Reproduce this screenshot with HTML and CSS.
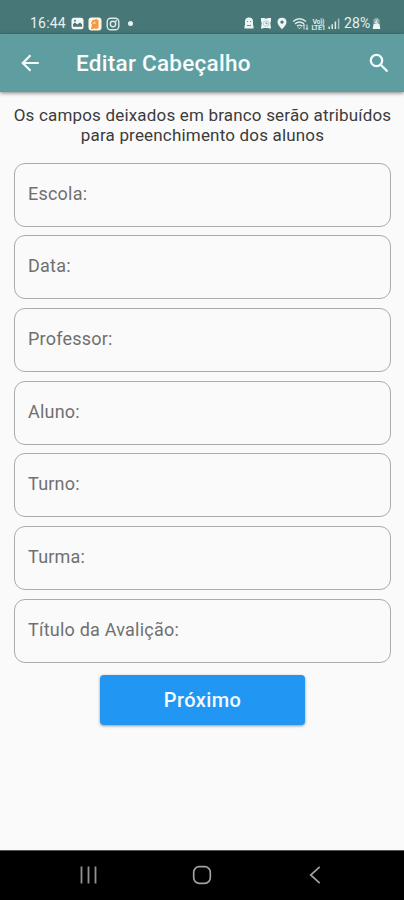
FILE: index.html
```html
<!DOCTYPE html>
<html lang="pt-BR">
<head>
<meta charset="utf-8">
<meta name="viewport" content="width=device-width">
<title>Editar Cabeçalho</title>
<link rel="stylesheet" href="styles.css">
</head>
<body>
<div class="status">
  <div class="status-left">
    <span class="clock">16:44</span>
    <svg width="13" height="13" viewBox="0 0 13 13"><rect x=".5" y=".8" width="12" height="11.5" rx="2.5" fill="#f2f8f8"/><path d="M2 9.8V7l2-1.500 2.300 2L9 5.500l2 1.700V9.800z" fill="#477777"/><circle cx="4" cy="3.700" r="1" fill="#477777"/></svg>
    <svg width="14" height="14" viewBox="0 0 14 14"><rect x=".5" y=".5" width="13" height="13" rx="3" fill="#fff5e8"/><path d="M4 3.500 8.500 2l2 1.500V11l-2.500 1-2-1-.5 1H3l1-4.500-1-1z" fill="#f49a3c"/><path d="M4.500 6.500 7 5v2" fill="none" stroke="#fff5e8" stroke-width=".8"/></svg>
    <svg width="14" height="14" viewBox="0 0 14 14" fill="none" stroke="#dce9e9" stroke-width="1.400"><rect x="1.200" y="1.200" width="11.600" height="11.600" rx="3.500"/><circle cx="7" cy="7" r="2.700"/><circle cx="10.300" cy="3.800" r=".3"/></svg>
    <i class="dot"></i>
  </div>
  <div class="status-right">
    <svg class="s1" width="10" height="13" viewBox="0 0 10 13"><path d="M1 4.500a4 4 0 0 1 8 0V8l.5 1v2.500h-9V9L1 8z" fill="#edf6f6"/><path d="M3 4.500h1m2 0h1M3 8.500h4" stroke="#648d8d" stroke-width="1.200"/></svg>
    <svg class="s2" width="12" height="13" viewBox="0 0 12 13"><path d="M1 1h3l2 .7L8 1h3v3l-.7 2 .7 5.500H9L8.500 11h-5l-.5.500H1L1.700 6 1 4z" fill="#edf6f6"/><circle cx="6" cy="6.500" r="2.800" fill="none" stroke="#a5c0c0" stroke-width=".7"/><path d="M6 5v1.700h1.500" fill="none" stroke="#648d8d" stroke-width=".9"/></svg>
    <svg class="s3" width="10" height="13" viewBox="0 0 10 13"><path fill-rule="evenodd" d="M5 .7a4.500 4.500 0 0 0-4.500 4.300C.5 8 5 12.300 5 12.300S9.500 8 9.500 5A4.500 4.500 0 0 0 5 .7zM5 3.400a1.700 1.700 0 1 1 0 3.400 1.700 1.700 0 0 1 0-3.400z" fill="#edf6f6"/></svg>
    <svg class="s4" width="17" height="14" viewBox="0 0 17 14" fill="none" stroke="#dce9e9" stroke-width="1.400"><path d="M1 4.500q6.500-5.500 13 0M3 6.900q4.500-3.800 9 0M5 9.100q2.500-2 5 0"/><path d="m6 10.300 1.500 1.500L9 10.300M12 12.500V7.500m-1.500 1.700L12 7.500l1 1M15 7.500v5m-1.200-1.300L15 12.500l1.200-1.300" stroke-width="1"/></svg>
    <svg class="s5" width="15" height="14" viewBox="0 0 15 14"><text x="1.500" y="6.500" textLength="12" class="volte">Vo))</text><text x=".5" y="13" textLength="14" class="volte">LTE1</text></svg>
    <svg class="s6" width="12" height="13" viewBox="0 0 12 13" stroke="#dce9e9" stroke-width="1.500"><path d="M1.200 12V9.500M4.200 12V7.200M7.400 12V4.500" /><path d="M10.600 12V1.500" stroke="#a9c1c1"/></svg>
    <span class="percent">28%</span>
    <svg class="s7" width="9" height="13" viewBox="0 0 9 13"><path d="M3 1h3v1h1.500v5H1.500V2H3z" fill="#8eafaf"/><path d="M1.500 7h6l.8 5H.7z" fill="#edf6f6"/><path d="M5 3 3.500 6h2L4 9" fill="none" stroke="#edf6f6"/></svg>
  </div>
</div>
<header class="appbar">
  <svg class="back" width="20" height="20" viewBox="0 0 20 20" fill="none" stroke="#f5fbfb" stroke-width="2.200"><path d="M18.800 10H3M10.500 2.300 2.800 10l7.700 7.700"/></svg>
  <h1>Editar Cabeçalho</h1>
  <svg class="search" width="20" height="20" viewBox="0 0 20 20" fill="none" stroke="#f5fbfb" stroke-width="2.300"><circle cx="7.500" cy="7.500" r="5.700"/><path d="m11.700 11.700 6.800 6.800"/></svg>
</header>
<main>
  <p class="hint">Os campos deixados em branco serão atribuídos<br>para preenchimento dos alunos</p>
  <div class="fields">
    <div class="field">Escola:</div>
    <div class="field">Data:</div>
    <div class="field">Professor:</div>
    <div class="field">Aluno:</div>
    <div class="field">Turno:</div>
    <div class="field">Turma:</div>
    <div class="field">Título da Avalição:</div>
  </div>
  <button class="next">Próximo</button>
</main>
<nav class="navbar">
  <svg width="18" height="18" viewBox="0 0 18 18" stroke="#929292" stroke-width="1.800"><path d="M1.500 .5v17M8.500 .5v17M15.500 .5v17"/></svg>
  <svg width="20" height="20" viewBox="0 0 20 20" fill="none" stroke="#a0a0a0" stroke-width="1.700"><rect x="1.700" y="1.700" width="16.600" height="16.600" rx="5.500"/></svg>
  <svg class="nav-back" width="12" height="18" viewBox="0 0 12 18" fill="none" stroke="#a0a0a0" stroke-width="1.700"><path d="M10.700 .8 1.700 9l9 8.200"/></svg>
</nav>
</body>
</html>
```
FILE: styles.css
```css
* { box-sizing: border-box; }
body {
  margin: 0;
  height: 900px;
  display: flex;
  flex-direction: column;
  overflow: hidden;
  background: #fafafa;
  font-family: Roboto, "Liberation Sans", sans-serif;
}
svg { display: block; flex: none; }
.status {
  height: 34px;
  flex: none;
  display: flex;
  justify-content: space-between;
  padding: 13px 23px 0 30px;
  background: #477777;
  color: #e8f1f1;
  font-size: 14px;
  line-height: 21px;
}
.status-left, .status-right { display: flex; align-items: center; height: 21px; }
.status-left { gap: 4px; }
.clock { width: 37px; letter-spacing: .2px; }
.dot { width: 5px; height: 5px; margin-left: 4px; border-radius: 50%; background: #e8f1f1; }
.s2 { margin-left: 6px; }
.s3 { margin-left: 5px; }
.s4 { margin-left: 5px; }
.s5 { margin-left: 2px; }
.s6 { margin-left: 2px; }
.percent { margin-left: 4px; width: 28px; letter-spacing: .1px; }
.volte { font-size: 7px; font-weight: 700; fill: #dce9e9; }
.appbar {
  height: 58px;
  flex: none;
  display: flex;
  align-items: center;
  padding: 0 15px 0 20px;
  background: #5f9ea0;
  box-shadow: 0 1px 4px rgba(0, 0, 0, .5);
}
.appbar h1 {
  flex: 1;
  margin: 0 0 0 36px;
  color: #f8fdfd;
  font-size: 22.5px;
  font-weight: 500;
  letter-spacing: .27px;
  line-height: 28px;
}
main { flex: 1; display: flex; flex-direction: column; align-items: center; padding: 13px 13px 0 14px; }
.hint {
  margin: 0;
  text-align: center;
  white-space: nowrap;
  color: #3c3c3c;
  font-size: 17px;
  letter-spacing: .18px;
  line-height: 20px;
}
.fields { align-self: stretch; display: flex; flex-direction: column; gap: 8.700px; margin-top: 17.500px; }
.field {
  height: 64px;
  padding: 0 13px;
  border: 1px solid #acacac;
  border-radius: 11px;
  color: #707070;
  font-size: 18px;
  letter-spacing: .22px;
  line-height: 60px;
}
.next {
  width: 205px;
  height: 50px;
  margin-top: 12.300px;
  padding: 0;
  border: 0;
  border-radius: 4px;
  background: #2196f3;
  box-shadow: 0 1px 3px rgba(0, 0, 0, .4);
  color: #f5faff;
  font: 500 20px/50px Roboto, "Liberation Sans", sans-serif;
  letter-spacing: .4px;
}
.navbar {
  height: 50px;
  flex: none;
  display: flex;
  align-items: center;
  padding: 0 0 2px 80px;
  gap: 94px;
  border-top: 1px solid #555;
  background: #000;
}
.nav-back { margin-left: 3px; }
```
